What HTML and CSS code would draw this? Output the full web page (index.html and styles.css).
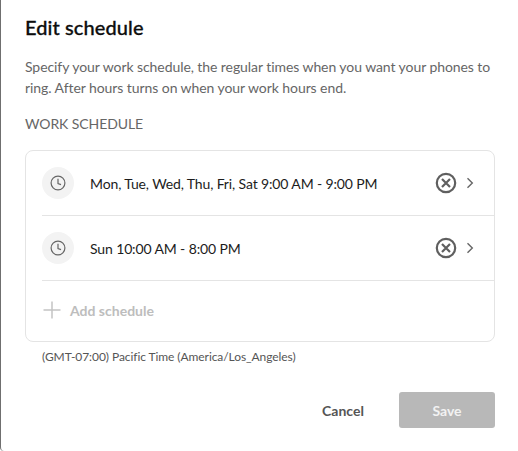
FILE: index.html
```html
<!DOCTYPE html>
<html>
<head>
  <meta charset="utf-8" />
  <title>Edit schedule</title>
  <link rel="stylesheet" href="styles.css">
</head>
<body>

<div class="dialog">
  <h2>Edit schedule</h2>
  <p class="intro">Specify your work schedule, the regular times when you want your phones to ring. After hours turns on when your work hours end.</p>
  <div class="label">WORK SCHEDULE</div>

  <div class="card">
    <div class="row">
      <span class="clock">
        <svg width="16" height="16" viewBox="0 0 16 16"><circle cx="8" cy="8" r="6.9"/><path d="M8 3.8V8.6L11 9.6"/></svg>
      </span>
      <span class="times">Mon, Tue, Wed, Thu, Fri, Sat 9:00 AM - 9:00 PM</span>
      <svg class="remove" width="22" height="22" viewBox="0 0 22 22"><circle cx="11" cy="11" r="9.2"/><path d="M7 7L15 15M15 7L7 15"/></svg>
      <svg class="chevron" width="8" height="12" viewBox="0 0 8 12"><path d="M1.5 1.2L6.3 6L1.5 10.8"/></svg>
    </div>
    <div class="row">
      <span class="clock">
        <svg width="16" height="16" viewBox="0 0 16 16"><circle cx="8" cy="8" r="6.9"/><path d="M8 3.8V8.6L11 9.6"/></svg>
      </span>
      <span class="times">Sun 10:00 AM - 8:00 PM</span>
      <svg class="remove" width="22" height="22" viewBox="0 0 22 22"><circle cx="11" cy="11" r="9.2"/><path d="M7 7L15 15M15 7L7 15"/></svg>
      <svg class="chevron" width="8" height="12" viewBox="0 0 8 12"><path d="M1.5 1.2L6.3 6L1.5 10.8"/></svg>
    </div>
    <div class="add">
      <svg width="18" height="18" viewBox="0 0 18 18"><path d="M9 0.5V17.5M0.5 9H17.5"/></svg>
      <span>Add schedule</span>
    </div>
  </div>

  <div class="zone">(GMT-07:00) Pacific Time (America/Los_Angeles)</div>

  <div class="actions">
    <button class="cancel">Cancel</button>
    <button class="save">Save</button>
  </div>
</div>

</body>
</html>
```

FILE: styles.css
```css
html { height: 100%; }
body {
  margin: 0;
  height: 451px;
  overflow: hidden;
  background: #fff;
  font-family: Lato, sans-serif;
  color: #1c1c1c;
}
.dialog {
  box-sizing: border-box;
  height: 451px;
  padding: 14px 23px 0 24px;
  border-left: 1px solid #6f6f6f;
  border-bottom-left-radius: 4px;
}
h2 {
  margin: 0;
  font-size: 20px;
  line-height: 26px;
  font-weight: 500;
  letter-spacing: 0.1px;
  color: #0d0d0d;
  -webkit-text-stroke: 0.3px #0d0d0d;
}
.intro {
  margin: 16px 0 0 0;
  font-size: 14px;
  line-height: 21px;
  letter-spacing: -0.07px;
  color: #666;
}
.label {
  margin-top: 17px;
  font-size: 14px;
  line-height: 18px;
  letter-spacing: -0.08px;
  color: #666;
}
.card {
  margin-top: 17px;
  border: 1px solid #e4e4e4;
  border-radius: 8px;
  padding-left: 16px;
  height: 192px;
  box-sizing: border-box;
}
.row {
  display: flex;
  align-items: center;
  height: 65px;
  border-bottom: 1px solid #e4e4e4;
  box-sizing: border-box;
  padding-right: 20px;
}
.clock {
  display: flex;
  align-items: center;
  justify-content: center;
  width: 32px;
  height: 32px;
  border-radius: 50%;
  background: #f3f3f3;
  margin-right: 16px;
  margin-bottom: 1px;
}
.clock svg {
  fill: none;
  stroke: #666;
  stroke-width: 1.2;
}
.times {
  flex: 1;
  font-size: 14px;
  letter-spacing: -0.13px;
  color: #1c1c1c;
}
.remove {
  fill: none;
  stroke: #5f5f5f;
  stroke-width: 2.2;
  margin-right: 9px;
}
.chevron {
  fill: none;
  stroke: #666;
  stroke-width: 1.4;
}
.add {
  display: flex;
  align-items: center;
  gap: 9px;
  height: 58px;
  font-size: 14px;
  font-weight: 700;
  color: #bdbdbd;
  padding-left: 1px;
}
.add svg {
  fill: none;
  stroke: #c4c4c4;
  stroke-width: 1.5;
}
.zone {
  margin: 7px 0 0 17px;
  font-size: 12px;
  line-height: 16px;
  letter-spacing: -0.07px;
  color: #555;
}
.actions {
  display: flex;
  justify-content: flex-end;
  align-items: center;
  margin-top: 27px;
}
button {
  font-family: Lato, sans-serif;
  font-size: 14px;
  font-weight: 700;
  border: 0;
  background: none;
  padding: 0;
}
.cancel {
  color: #555;
  margin-right: 35px;
  letter-spacing: 0.03px;
}
.save {
  width: 96px;
  height: 36px;
  border-radius: 3px;
  background: #b8b8b8;
  color: #f2f2f2;
}
```
